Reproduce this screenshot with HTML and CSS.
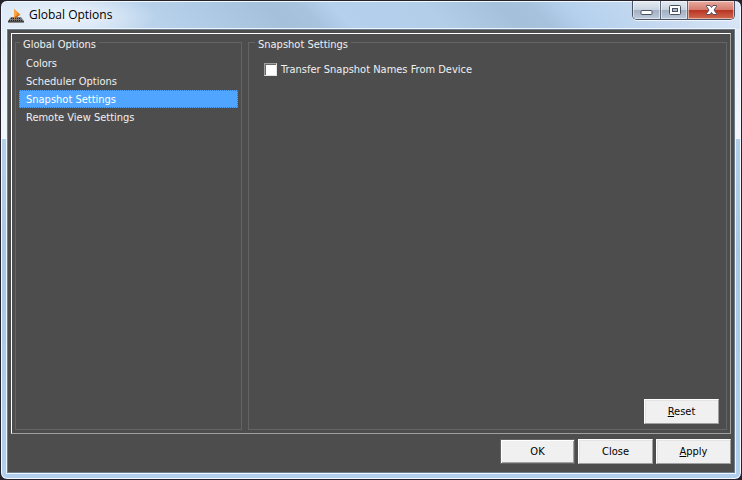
FILE: index.html
```html
<!DOCTYPE html>
<html lang="en">
<head>
<meta charset="utf-8">
<title>Global Options</title>
<link rel="stylesheet" href="styles.css">
</head>
<body>
<div class="window">
   <header class="titlebar">
      <svg class="appicon" width="16" height="16" viewBox="0 0 16 16">
         <path d="M3 9 H13 L16 13 V15 H0 V13 Z" fill="#777"/>
         <path d="M3 10.5 H13 M1 12.5 H15" stroke="#222" stroke-dasharray="1 1"/>
         <path d="M0 13 H16 V14 H0 Z" fill="#444"/>
         <path d="M0 14 H16 V15 H0 Z" fill="#8a8a8a"/>
         <path d="M6 1 L12.5 6.5 L6 11 Z" fill="#ee8a1e"/>
         <path d="M6 1 L9 3.5 L8 9.5 L6 11 Z" fill="#f8a548"/>
         <path d="M12.5 6.5 L6 11 L7 8.5 Z" fill="#c4620f"/>
      </svg>
      <h1>Global Options</h1>
      <div class="controls">
         <button class="min" aria-label="Minimize">
            <svg width="13" height="13" viewBox="0 0 13 13"><rect x="1" y="6.5" width="11" height="4" rx="1" fill="#fff" stroke="#4a5060"/></svg>
         </button>
         <button class="max" aria-label="Maximize">
            <svg width="13" height="13" viewBox="0 0 13 13"><rect x="1.5" y="1.5" width="11" height="9" rx="1" fill="#fff" stroke="#4a5060"/><rect x="4.5" y="4.5" width="5" height="3" fill="#a9b8cb" stroke="#4a5060"/></svg>
         </button>
         <button class="close" aria-label="Close window">
            <svg width="13" height="13" viewBox="0 0 13 13"><path d="M1.5 1.5 H5 L6.5 3.5 L8 1.5 H11.5 V2.5 L9 6 L11.5 9.5 V10.5 H8 L6.5 8.5 L5 10.5 H1.5 V9.5 L4 6 L1.5 2.5 Z" fill="#fff" stroke="#5a4a58"/></svg>
         </button>
      </div>
   </header>
   <main class="client">
      <div class="panel">
         <fieldset class="group nav">
            <legend>Global Options</legend>
            <ul>
               <li><a href="#colors">Colors</a></li>
               <li><a href="#scheduler">Scheduler Options</a></li>
               <li><a href="#snapshot" class="selected">Snapshot Settings</a></li>
               <li><a href="#remote">Remote View Settings</a></li>
            </ul>
         </fieldset>
         <fieldset class="group settings">
            <legend>Snapshot Settings</legend>
            <label class="check"><input type="checkbox">Transfer Snapshot Names From Device</label>
            <button class="btn reset"><u>R</u>eset</button>
         </fieldset>
      </div>
      <footer class="actions">
         <button class="btn default">OK</button>
         <button class="btn">Close</button>
         <button class="btn"><u>A</u>pply</button>
      </footer>
   </main>
</div>
</body>
</html>
```
FILE: styles.css
```css
*{
   box-sizing: border-box;
}
body{
   margin: 0;
   background: #25222b;
   font-family: "DejaVu Sans Condensed", Tahoma, "Noto Sans", sans-serif;
   font-size: 11px;
   line-height: 14px;
}
button, input{
   font: inherit;
   margin: 0;
}
.window{
   display: flex;
   flex-direction: column;
   height: 100vh;
   padding: 0 5px 6px;
   border: 1px solid #25222b;
   border-radius: 7px;
   box-shadow: inset 0 0 0 1px #f4f9ff;
   background:
      radial-gradient(90px 24px at 66px 15px, rgba(240,246,253,.9), rgba(240,246,253,0)) no-repeat,
      linear-gradient(45deg, #dfeaf7 0, #cddff2 12%, #bad3ec 20%, #b0cbe6 28%, #a5c0da 38%, #a8c3de 42%, #b4d0ec 46%, #b2cee9 58%, #a4c0da 68%, #a6c2dd 72%, #b5d1ed 77%, #c8daf1 88%, #dce9f7 100%) 0 0 / 100% 28px no-repeat,
      linear-gradient(#dfe9f6, #f3f7fc 138px, #b4cfea 138px, #a9c6e4 250px, #b2d0ee);
}
.titlebar{
   display: flex;
   align-items: flex-start;
   height: 27px;
   padding-right: 1px;
   flex: none;
}
.appicon{
   margin: 7px 5px 0 2px;
}
h1{
   margin: 6px auto 0 0;
   font: 12px/16px "Open Sans", "Segoe UI", sans-serif;
   color: #000;
}
.controls{
   display: flex;
   height: 19px;
   border: 1px solid #4b5365;
   border-top: 0;
   border-radius: 0 0 5px 5px;
   box-shadow: 0 1px 0 #f0f6fd;
   overflow: hidden;
}
.controls button{
   display: flex;
   align-items: center;
   justify-content: center;
   width: 27px;
   padding: 0;
   border: 0;
   border-right: 1px solid #5d6779;
   background: linear-gradient(#e4ebf3, #c9d3e0 9px, #a2afc0 9px, #bccbdd);
   box-shadow: inset 0 0 0 1px rgba(255,255,255,.5);
}
.controls .min{
   width: 28px;
}
.controls .close{
   width: 46px;
   border-right: 0;
   background: linear-gradient(#e9aba0, #d37a6b 9px, #b83220 9px, #d06a50);
}
.client{
   display: flex;
   flex-direction: column;
   flex: 1;
   gap: 5px;
   margin: 1px 1px 0;
   padding: 3px 3px 8px;
   border: 1px solid #6d7d8c;
   outline: 1px solid #eef6fd;
   background: #4d4d4d;
   color: #f0f0f0;
}
.panel{
   display: flex;
   flex: 1;
   gap: 6px;
   padding: 0 3px 3px;
   border: 1px solid #a0a0a0;
   border-top-color: #fff;
   border-left-color: #fff;
}
.group{
   margin: 0;
   padding: 0 3px;
   border: 1px solid #646464;
   min-width: 0;
}
legend{
   margin-left: 1px;
   padding: 6px 3px 0;
   line-height: 10px;
}
.nav{
   flex: 0 0 227px;
}
.settings{
   display: flex;
   flex-direction: column;
   flex: 1;
   padding: 0 7px 5px;
}
.settings legend{
   margin-left: -1px;
}
ul{
   list-style: none;
   margin: 4px 0 0;
   padding: 0;
}
.nav a{
   display: block;
   padding: 2px 6px 0;
   border: 1px dotted transparent;
   color: #f0f0f0;
   text-decoration: none;
}
.nav .selected{
   background: #4fa5ff;
   border-color: #b05a00;
   color: #fff;
}
.check{
   display: flex;
   align-items: center;
   gap: 4px;
   margin: 12px 0 0 8px;
   line-height: 15px;
}
.check input{
   appearance: none;
   width: 13px;
   height: 13px;
   border: 1px solid #e3e3e3;
   border-top-color: #a0a0a0;
   border-left-color: #a0a0a0;
   box-shadow: inset 1px 1px 0 #696969;
   background: #fff;
}
.btn{
   width: 75px;
   height: 25px;
   padding: 0;
   border: 1px solid #a0a0a0;
   border-top-color: #fff;
   border-left-color: #fff;
   box-shadow: inset 1px 1px 0 #e3e3e3;
   background: #f0f0f0;
   color: #000;
}
.btn.default{
   border-color: #646464;
   box-shadow: inset 1px 1px 0 #fff, inset -1px -1px 0 #a0a0a0;
}
.reset{
   margin-top: auto;
   margin-left: auto;
}
.actions{
   display: flex;
   justify-content: flex-end;
   gap: 3px;
}
```
